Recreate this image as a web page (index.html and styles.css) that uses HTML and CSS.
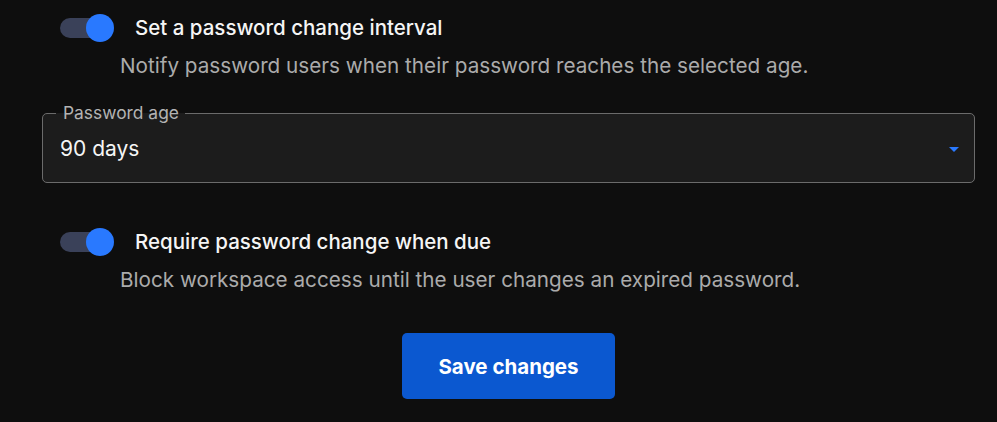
FILE: index.html
```html
<!DOCTYPE html>
<html lang="en">
<head>
<meta charset="utf-8">
<title>Password settings</title>
<link rel="stylesheet" href="styles.css">
</head>
<body>
<main class="panel">
  <section class="setting setting-first">
    <div class="setting-head">
      <span class="switch" role="switch" aria-checked="true"><span class="switch-track"></span><span class="switch-thumb"></span></span>
      <span class="setting-title">Set a password change interval</span>
    </div>
    <p class="setting-desc">Notify password users when their password reaches the selected age.</p>
  </section>

  <fieldset class="field">
    <legend class="field-legend">Password age</legend>
    <div class="select">
      <span class="select-value">90 days</span>
      <svg class="select-arrow" width="10" height="5" viewBox="0 0 10 5"><path d="M0 0 L10 0 L5 5 Z" fill="#2979ff"/></svg>
    </div>
  </fieldset>

  <section class="setting setting-second">
    <div class="setting-head">
      <span class="switch" role="switch" aria-checked="true"><span class="switch-track"></span><span class="switch-thumb"></span></span>
      <span class="setting-title">Require password change when due</span>
    </div>
    <p class="setting-desc">Block workspace access until the user changes an expired password.</p>
  </section>

  <div class="actions">
    <button class="btn-primary" type="button">Save changes</button>
  </div>
</main>
</body>
</html>
```
FILE: styles.css
```css
* { box-sizing: border-box; }
html, body {
  margin: 0;
  padding: 0;
  background: #0e0e0e;
  height: 100%;
}
body {
  font-family: "Inter", "Noto Sans", sans-serif;
  color: #f2f2f2;
  overflow: hidden;
}
.panel {
  width: 933px;
  margin-left: 42px;
  padding-top: 14px;
}
.setting {
  padding-left: 18px;
}
.setting-head {
  display: flex;
  align-items: center;
  height: 28px;
}
.switch {
  position: relative;
  width: 54px;
  height: 28px;
  flex: 0 0 54px;
}
.switch-track {
  position: absolute;
  left: 0;
  top: 4px;
  width: 48px;
  height: 20px;
  border-radius: 10px;
  background: #3a4159;
}
.switch-thumb {
  position: absolute;
  left: 26px;
  top: 0;
  width: 28px;
  height: 28px;
  border-radius: 50%;
  background: #2979ff;
}
.setting-title {
  margin-left: 21px;
  font-size: 20.5px;
  font-weight: 500;
  line-height: 28px;
  color: #f5f5f5;
  white-space: nowrap;
}
.setting-desc {
  margin: 12px 0 0 60px;
  font-size: 20.7px;
  line-height: 24px;
  color: #ababab;
  white-space: nowrap;
}
.field {
  margin: 26px 0 0;
  padding: 15px 15px 21px 17px;
  border: 1px solid #6b6b6b;
  border-radius: 5px;
  background: #1c1c1c;
  min-width: 0;
}
.field-legend {
  margin-left: -4px;
  padding: 0 6px 0 7px;
  font-size: 17.4px;
  line-height: 18px;
  color: #b3b3b3;
}
.select {
  display: flex;
  align-items: center;
  justify-content: space-between;
  height: 24px;
}
.select-value {
  font-size: 21px;
  line-height: 24px;
  color: #f5f5f5;
}
.select-arrow {
  display: block;
}
.setting-second {
  margin-top: 45px;
}
.actions {
  display: flex;
  justify-content: center;
  margin-top: 41px;
}
.btn-primary {
  width: 213px;
  height: 66px;
  border: 0;
  border-radius: 5px;
  background: #0b58d0;
  color: #ffffff;
  font-family: "Inter", "Noto Sans", sans-serif;
  font-size: 20.5px;
  font-weight: 700;
}
```
